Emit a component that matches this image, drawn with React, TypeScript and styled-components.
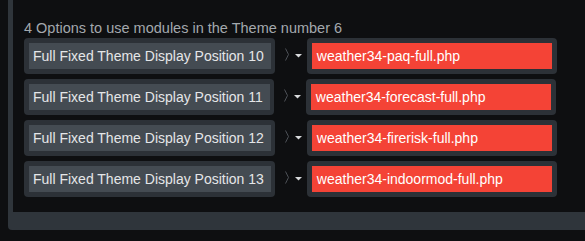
import styled, { createGlobalStyle } from 'styled-components';

const GlobalStyle = createGlobalStyle`
  html, body {
    margin: 0;
    background: #0e0f11;
    overflow: hidden;
    font-family: 'Liberation Sans', Arial, sans-serif;
  }
`;

const MODULES = [
  { position: 10, file: 'weather34-paq-full.php' },
  { position: 11, file: 'weather34-forecast-full.php' },
  { position: 12, file: 'weather34-firerisk-full.php' },
  { position: 13, file: 'weather34-indoormod-full.php' },
];

export default function App() {
  return (
    <>
      <GlobalStyle />
      <Frame>
        <Content>
          <Title>4 Options to use modules in the Theme number 6</Title>
          <RowList>
            {MODULES.map((m) => (
              <Row key={m.position}>
                <SelectWrap>
                  <SelectLabel>Full Fixed Theme Display Position {m.position}</SelectLabel>
                </SelectWrap>
                <Arrow>
                  <svg width="4" height="13" viewBox="0 0 4 13">
                    <polyline points="0.5,0.5 3.5,6.5 0.5,12.5" fill="none" stroke="#4c5157" strokeWidth="1" />
                  </svg>
                  <svg width="7" height="4" viewBox="0 0 7 4">
                    <polygon points="0,0 7,0 3.5,3.5" fill="#d8dadc" />
                  </svg>
                </Arrow>
                <FileWrap>
                  <FileInput>{m.file}</FileInput>
                </FileWrap>
              </Row>
            ))}
          </RowList>
        </Content>
      </Frame>
    </>
  );
}

const Frame = styled.div`
  margin-left: 8px;
  background: #2f353b;
  padding: 0 0 18px 5px;
  border-bottom-left-radius: 4px;
`;

const Content = styled.div`
  height: 212px;
  box-sizing: border-box;
  background: #0e0f11;
  padding: 20px 0 0 11px;
`;

const Title = styled.div`
  font-size: 14.5px;
  line-height: 16px;
  color: #a3a8ad;
  margin-bottom: 2px;
`;

const RowList = styled.div`
  display: flex;
  flex-direction: column;
  gap: 5px;
`;

const Row = styled.div`
  display: flex;
  align-items: center;
`;

const SelectWrap = styled.div`
  background: #2c3137;
  border-radius: 4px;
  padding: 5px 4px 5px 5px;
`;

const SelectLabel = styled.div`
  background: #444b52;
  height: 26px;
  line-height: 26px;
  padding: 0 7px 0 4px;
  font-size: 14px;
  color: #e4e6e8;
  white-space: nowrap;
`;

const Arrow = styled.div`
  display: flex;
  align-items: center;
  gap: 6px;
  padding: 0 5px 0 10px;
  margin-top: -3px;

  svg:last-child {
    margin-top: 3px;
  }
`;

const FileWrap = styled.div`
  background: #2c3137;
  border-radius: 4px;
  padding: 5px;
`;

const FileInput = styled.div`
  background: #f44336;
  width: 240px;
  box-sizing: border-box;
  height: 26px;
  line-height: 26px;
  padding: 0 5px;
  font-size: 14px;
  color: #ffffff;
  white-space: nowrap;
`;
